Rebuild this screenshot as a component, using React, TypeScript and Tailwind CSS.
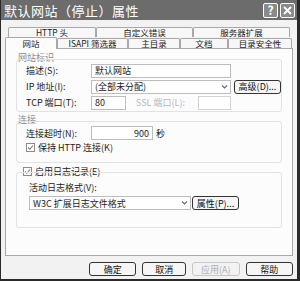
import React from "react";

const font = { fontFamily: '"Noto Sans CJK SC", "Liberation Sans", sans-serif' };

function Tab({ w, label, active }: { w: string; label: string; active?: boolean }) {
  return (
    <div
      className={`${w} flex items-center justify-center border-t border-l border-r border-[#a8a8a8] rounded-t-[2px] text-[8.5px] leading-none text-[#222] ${
        active ? "h-[12px] -mb-px bg-[#fcfcfc] z-10" : "h-[10px] bg-[#f7f7f7]"
      }`}
    >
      {label}
    </div>
  );
}

function Btn({ w, label, disabled }: { w: string; label: string; disabled?: boolean }) {
  return (
    <div
      className={`${w} h-[14px] flex items-center justify-center rounded-[3px] border text-[9px] leading-none ${
        disabled ? "border-[#c8c8c8] text-[#b0b0b0]" : "border-[#333] text-[#111] bg-[#f6f6f6]"
      }`}
    >
      {label}
    </div>
  );
}

function Check({ label }: { label: string }) {
  return (
    <div className="flex items-center gap-[3px] text-[9px] leading-none text-[#222]">
      <div className="w-[9px] h-[9px] border border-[#8a8a8a] bg-white flex items-center justify-center">
        <svg width="7" height="7" viewBox="0 0 7 7">
          <path d="M1 3.5 L2.8 5.3 L6 1.5" fill="none" stroke="#777" strokeWidth="1.1" />
        </svg>
      </div>
      <span>{label}</span>
    </div>
  );
}

function Arrow() {
  return (
    <div className="w-[11px] h-[10px] flex items-center justify-center">
      <svg width="7" height="4" viewBox="0 0 7 4">
        <path d="M1 0.5 L3.5 3 L6 0.5" fill="none" stroke="#666" strokeWidth="1.1" />
      </svg>
    </div>
  );
}

export default function App() {
  return (
    <div style={font} className="w-[300px] h-[281px] bg-[#2a2a2a] pl-[1px] pr-[3px] pb-[2px]">
      <div className="w-full h-full flex flex-col bg-[#f2f2f2]">
        {/* Title bar */}
        <div className="h-[20px] bg-[#6c6c6c] flex items-center justify-between pl-[3px] pr-[2px]">
          <span className="text-[13px] leading-none text-white tracking-[0.5px]">默认网站（停止）属性</span>
          <div className="flex gap-[2px]">
            <div className="w-[15px] h-[15px] rounded-[2px] border border-white bg-[#8a8a8a] flex items-center justify-center text-white text-[12px] font-bold leading-none">
              ?
            </div>
            <div className="w-[15px] h-[15px] rounded-[2px] border border-white bg-[#8a8a8a] flex items-center justify-center">
              <svg width="9" height="9" viewBox="0 0 9 9">
                <path d="M1 1 L8 8 M8 1 L1 8" stroke="white" strokeWidth="1.8" />
              </svg>
            </div>
          </div>
        </div>

        <div className="flex-1 flex flex-col px-[4px] pt-[7px]">
          {/* Tabs */}
          <div className="flex pl-[3px]">
            <Tab w="w-[88px]" label="HTTP 头" />
            <Tab w="w-[97px]" label="自定义错误" />
            <Tab w="w-[97px]" label="服务器扩展" />
          </div>
          <div className="flex items-end h-[11px]">
            <Tab w="w-[52px]" label="网站" active />
            <Tab w="w-[71px]" label="ISAPI 筛选器" />
            <Tab w="w-[52px]" label="主目录" />
            <Tab w="w-[48px]" label="文档" />
            <Tab w="w-[64px]" label="目录安全性" />
          </div>

          {/* Panel */}
          <div className="w-[288px] h-[208px] border border-[#a8a8a8] bg-[#fcfcfc] px-[10px] pt-[4px] flex flex-col text-[9px] leading-none text-[#222]">
            {/* 网站标识 */}
            <div className="text-[#8a8a8a] h-[9px] pl-[2px]">网站标识</div>
            <div className="mt-[-3px] border border-[#e2e2e2] rounded-[3px] h-[53px] pl-[9px] pt-[3px] flex flex-col gap-[1px]">
              <div className="flex items-center h-[15px]">
                <span className="w-[65px]">描述(S):</span>
                <div className="w-[140px] h-[14px] border border-[#bdbdbd] bg-white flex items-center px-[3px]">默认网站</div>
              </div>
              <div className="flex items-center h-[15px]">
                <span className="w-[65px]">IP 地址(I):</span>
                <div className="w-[140px] h-[14px] border border-[#bdbdbd] bg-white flex items-center justify-between pl-[3px]">
                  <span>(全部未分配)</span>
                  <Arrow />
                </div>
                <div className="ml-[3px]">
                  <Btn w="w-[47px]" label="高级(D)..." />
                </div>
              </div>
              <div className="flex items-center h-[15px]">
                <span className="w-[65px]">TCP 端口(T):</span>
                <div className="w-[35px] h-[14px] border border-[#bdbdbd] bg-white flex items-center px-[3px]">80</div>
                <span className="ml-[10px] w-[62px] text-[#b8b8b8]">SSL 端口(L):</span>
                <div className="w-[33px] h-[14px] border border-[#d2d2d2] bg-white" />
              </div>
            </div>

            {/* 连接 */}
            <div className="mt-[3px] text-[#8a8a8a] h-[9px] pl-[2px]">连接</div>
            <div className="mt-[-3px] border border-[#e2e2e2] rounded-[3px] h-[42px] pl-[9px] pt-[4px] flex flex-col gap-[3px]">
              <div className="flex items-center h-[14px]">
                <span className="w-[65px]">连接超时(N):</span>
                <div className="w-[62px] h-[14px] border border-[#bdbdbd] bg-white flex items-center justify-end px-[3px]">900</div>
                <span className="ml-[3px]">秒</span>
              </div>
              <Check label="保持 HTTP 连接(K)" />
            </div>

            {/* 日志 */}
            <div className="mt-[4px] h-[9px] pl-[7px]">
              <Check label="启用日志记录(E)" />
            </div>
            <div className="mt-[-4px] border border-[#e2e2e2] rounded-[3px] h-[56px] pl-[12px] pt-[10px] flex flex-col gap-[4px]">
              <span>活动日志格式(V):</span>
              <div className="flex items-center">
                <div className="w-[162px] h-[14px] border border-[#bdbdbd] bg-white flex items-center justify-between pl-[3px]">
                  <span>W3C 扩展日志文件格式</span>
                  <Arrow />
                </div>
                <div className="ml-[1px]">
                  <Btn w="w-[47px]" label="属性(P)..." />
                </div>
              </div>
            </div>
          </div>

          {/* Bottom buttons */}
          <div className="flex items-center mt-[6px] pl-[84px] gap-[6px]">
            <Btn w="w-[48px]" label="确定" />
            <Btn w="w-[44px]" label="取消" />
            <Btn w="w-[48px]" label="应用(A)" disabled />
            <Btn w="w-[48px]" label="帮助" />
          </div>
        </div>
      </div>
    </div>
  );
}
